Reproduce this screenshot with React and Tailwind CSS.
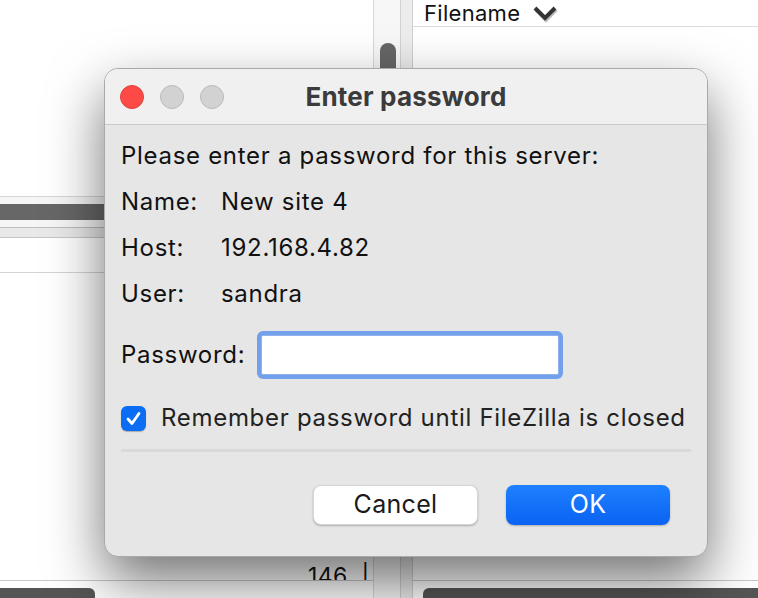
import React from 'react'

const sans = { fontFamily: 'Inter, "Liberation Sans", Arial, sans-serif' }

function Background() {
  return (
    <div className="absolute inset-0 flex bg-white">
      {/* left pane */}
      <div className="w-[373px] h-full flex flex-col">
        <div className="h-[196px] bg-white" />
        <div className="h-px bg-[#d6d6d6]" />
        <div className="h-[7px] bg-[#f5f5f5]" />
        <div className="h-[16px] bg-[#676767]" />
        <div className="h-[7px] bg-[#f5f5f5]" />
        <div className="h-px bg-[#bdbdbd]" />
        <div className="h-[9px] bg-[#e9e9e9]" />
        <div className="h-px bg-[#c6c6c6]" />
        <div className="h-[34px] bg-white" />
        <div className="h-px bg-[#d4d4d4]" />
        <div className="flex-1 bg-white" />
        <div className="h-[20px] overflow-hidden pl-[308px] pt-[3px]">
          <span className="text-[23px] leading-[26px] tracking-[0.4px] text-[#111]">146 &nbsp;|</span>
        </div>
        <div className="h-px bg-[#c8c8c8]" />
        <div className="h-[7px]" />
        <div className="h-[10px] w-[95px] bg-[#555] rounded-tr-[6px]" />
      </div>
      {/* vertical scrollbar */}
      <div className="w-[27px] h-full border-l border-[#d8d8d8] bg-[#f7f7f7] flex flex-col">
        <div className="h-[43px]" />
        <div className="ml-[6px] w-[16px] h-[160px] bg-[#666] rounded-t-full" />
      </div>
      {/* splitter */}
      <div className="w-[13px] h-full bg-[#ececec] border-l border-r border-[#d0d0d0]" />
      {/* right pane */}
      <div className="flex-1 h-full flex flex-col">
        <div className="h-[27px] border-b border-[#dcdcdc] flex items-center pl-[11px] gap-[12px]">
          <span className="text-[22px] leading-[24px] tracking-[0.3px] text-[#111]">Filename</span>
          <svg width="26" height="20" viewBox="0 0 26 20">
            <polyline points="3,5 13,15 23,5" fill="none" stroke="#bbb" strokeWidth="4.5" transform="translate(1,1.5)" />
            <polyline points="3,5 13,15 23,5" fill="none" stroke="#333" strokeWidth="4" />
          </svg>
        </div>
        <div className="flex-1" />
        <div className="h-px bg-[#c8c8c8]" />
        <div className="h-[7px]" />
        <div className="h-[10px] ml-[10px] bg-[#555] rounded-tl-[6px]" />
      </div>
    </div>
  )
}

function Dialog() {
  return (
    <div
      className="absolute left-[104px] top-[68px] w-[604px] rounded-[14px] border border-[#a9a9a9] bg-[#e6e6e6] overflow-hidden shadow-[0_24px_55px_rgba(0,0,0,0.55)]"
      style={sans}
    >
      <div className="h-[56px] bg-[#f0f0f0] border-b border-[#c9c9c9] flex items-center relative">
        <div className="flex items-center gap-[16px] pl-[15px]">
          <div className="w-[24px] h-[24px] rounded-full bg-[#fd4a46] border border-[#e0403a]" />
          <div className="w-[24px] h-[24px] rounded-full bg-[#d2d2d2] border border-[#b9b9b9]" />
          <div className="w-[24px] h-[24px] rounded-full bg-[#d2d2d2] border border-[#b9b9b9]" />
        </div>
        <div className="absolute inset-0 flex items-center justify-center">
          <span className="text-[26px] font-bold text-[#3b3b3b] tracking-[0.2px]">Enter password</span>
        </div>
      </div>
      <div className="px-[16px] pt-[8px] pb-[31px] flex flex-col text-[24px] tracking-[0.7px] text-[#111]">
        <div className="h-[46px] flex items-center">Please enter a password for this server:</div>
        <div className="h-[46px] flex items-center">
          <span className="w-[100px]">Name:</span>
          <span>New site 4</span>
        </div>
        <div className="h-[46px] flex items-center">
          <span className="w-[100px]">Host:</span>
          <span>192.168.4.82</span>
        </div>
        <div className="h-[46px] flex items-center">
          <span className="w-[100px]">User:</span>
          <span>sandra</span>
        </div>
        <div className="mt-[14px] h-[48px] flex items-center gap-[12px]">
          <span>Password:</span>
          <div className="w-[306px] h-[48px] rounded-[6px] bg-[#73a0ea] p-[4px]">
            <div className="w-full h-full bg-white border border-[#8fb2ee] rounded-[2px]" />
          </div>
        </div>
        <div className="mt-[16px] h-[46px] flex items-center gap-[15px]">
          <div className="w-[25px] h-[25px] rounded-[6px] bg-[#0b6df4] flex items-center justify-center shadow-[0_1px_1px_rgba(0,0,0,0.25)]">
            <svg width="17" height="17" viewBox="0 0 17 17">
              <polyline points="3,9 7,13.5 14,3.5" fill="none" stroke="white" strokeWidth="2.8" strokeLinecap="round" strokeLinejoin="round" />
            </svg>
          </div>
          <span className="text-[#222]">Remember password until FileZilla is closed</span>
        </div>
        <div className="mt-[8px] h-[3px] bg-[#d9d9d9]" />
        <div className="mt-[33px] flex justify-end gap-[28px] pr-[21px]">
          <button className="w-[165px] h-[40px] rounded-[8px] bg-white text-[25px] tracking-[0.3px] text-[#1a1a1a] shadow-[0_1px_2px_rgba(0,0,0,0.25)] border border-[#d6d6d6]">Cancel</button>
          <button className="w-[164px] h-[40px] rounded-[8px] bg-gradient-to-b from-[#1e80ff] to-[#0a63f2] text-[25px] tracking-[0.3px] text-white shadow-[0_1px_2px_rgba(0,0,0,0.25)]">OK</button>
        </div>
      </div>
    </div>
  )
}

export default function App() {
  return (
    <div className="relative w-[758px] h-[598px] overflow-hidden bg-white" style={sans}>
      <Background />
      <Dialog />
    </div>
  )
}
